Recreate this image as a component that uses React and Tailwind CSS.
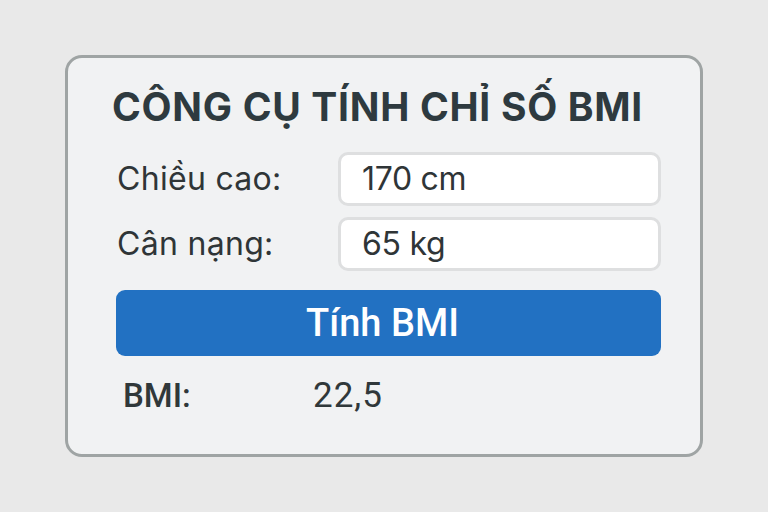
import React from 'react';

const Field = ({ label, value }) => (
  <div className="flex items-center">
    <label className="w-[222px] pl-[1px] text-[32px] leading-none tracking-[0.3px] text-[#2f3537]">{label}</label>
    <div className="flex h-[54px] flex-1 items-center rounded-[10px] border-[3px] border-[#dedfe0] bg-white pl-[21px] text-[32px] tracking-[-0.3px] text-[#2f3537]">
      {value}
    </div>
  </div>
);

export default function App() {
  return (
    <div
      className="flex h-[512px] w-full items-center justify-center bg-[#e9e9e9]"
      style={{ fontFamily: 'Inter, "Noto Sans", sans-serif' }}
    >
      <div className="flex h-[402px] w-[638px] flex-col rounded-[17px] border-[3px] border-[#9fa4a4] bg-[#f1f2f3] pl-[48px] pr-[39px] pt-[25px]">
        {/* Title */}
        <h1 className="-ml-[4px] text-[39px] font-bold leading-[48px] tracking-[0.7px] text-[#2e3a3f]">
          CÔNG CỤ TÍNH CHỈ SỐ BMI
        </h1>

        {/* Inputs */}
        <div className="mt-[21px] flex flex-col gap-[11px]">
          <Field label="Chiều cao:" value="170 cm" />
          <Field label="Cân nạng:" value="65 kg" />
        </div>

        {/* Button */}
        <button
          className="mt-[19px] h-[66px] w-full rounded-[9px] bg-[#2271c2] pr-[12px] text-[38px] font-medium text-white"
          style={{ fontFamily: 'Roboto, sans-serif' }}
        >
          Tính BMI
        </button>

        {/* Result */}
        <div
          className="mt-[22px] flex items-center text-[33px] leading-none text-[#30383a]"
          style={{ fontFamily: 'Roboto, sans-serif' }}
        >
          <span className="w-[197px] pl-[7px] font-medium">BMI:</span>
          <span className="text-[35px] tracking-[1px]">22,5</span>
        </div>
      </div>
    </div>
  );
}
